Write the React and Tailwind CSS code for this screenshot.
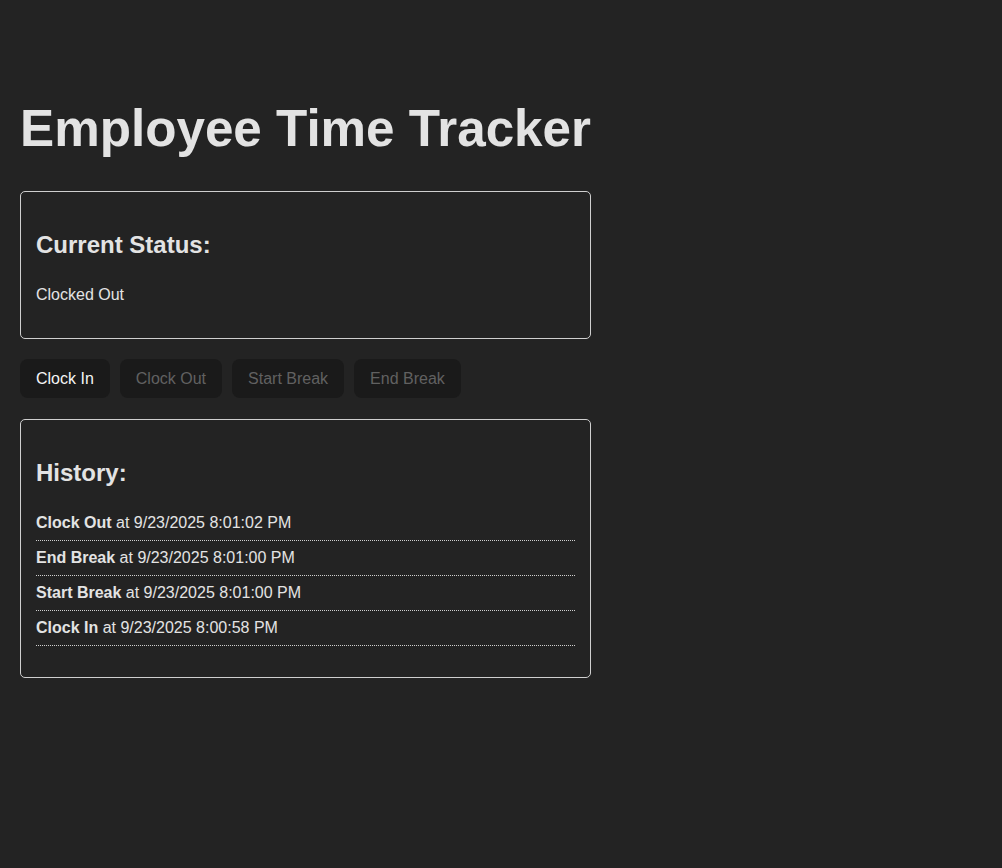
import { useState } from 'react';

const font = { fontFamily: "'Liberation Sans', Arial, sans-serif" };

const initialHistory = [
  { type: 'Clock Out', time: '9/23/2025 8:01:02 PM' },
  { type: 'End Break', time: '9/23/2025 8:01:00 PM' },
  { type: 'Start Break', time: '9/23/2025 8:01:00 PM' },
  { type: 'Clock In', time: '9/23/2025 8:00:58 PM' },
];

export default function App() {
  const [status, setStatus] = useState('Clocked Out');
  const [history, setHistory] = useState(initialHistory);

  const record = (type, next) => {
    setStatus(next);
    setHistory([{ type, time: new Date().toLocaleString('en-US') }, ...history]);
  };

  const clockedOut = status === 'Clocked Out';
  const onBreak = status === 'On Break';

  const buttons = [
    { label: 'Clock In', disabled: !clockedOut, next: 'Clocked In' },
    { label: 'Clock Out', disabled: clockedOut || onBreak, next: 'Clocked Out' },
    { label: 'Start Break', disabled: clockedOut || onBreak, next: 'On Break' },
    { label: 'End Break', disabled: !onBreak, next: 'Clocked In' },
  ];

  return (
    <div className="min-h-screen bg-[#232323] text-[#e3e3e3] px-[20px] pt-[101px] leading-[1.5]" style={font}>
      <h1 className="text-[51.2px] font-bold leading-[1.1] mb-[34px]">Employee Time Tracker</h1>

      {/* Status */}
      <div className="w-[571px] border border-[#cfcfcf] rounded-[5px] p-[15px]">
        <h2 className="text-[24px] font-bold leading-[36px] mt-[20px] mb-[20px]">Current Status:</h2>
        <p className="text-[16px] leading-[24px] mb-[16px]">{status}</p>
      </div>

      {/* Actions */}
      <div className="flex gap-[10px] mt-[20px] mb-[21px]">
        {buttons.map((b) => (
          <button
            key={b.label}
            disabled={b.disabled}
            onClick={() => record(b.label, b.next)}
            className={`bg-[#1a1a1a] rounded-[8px] px-[16px] py-[10px] text-[16px] leading-[19px] ${
              b.disabled ? 'text-[#616161] cursor-not-allowed' : 'text-[#f5f5f5] cursor-pointer'
            }`}
          >
            {b.label}
          </button>
        ))}
      </div>

      {/* History */}
      <div className="w-[571px] border border-[#cfcfcf] rounded-[5px] p-[15px]">
        <h2 className="text-[24px] font-bold leading-[36px] mt-[20px] mb-[15px]">History:</h2>
        <ul className="mb-[16px]">
          {history.map((h, i) => (
            <li key={i} className="py-[5px] text-[16px] leading-[24px] border-b border-dotted border-[#cfcfcf]">
              <strong className="font-bold">{h.type}</strong> at {h.time}
            </li>
          ))}
        </ul>
      </div>
    </div>
  );
}
